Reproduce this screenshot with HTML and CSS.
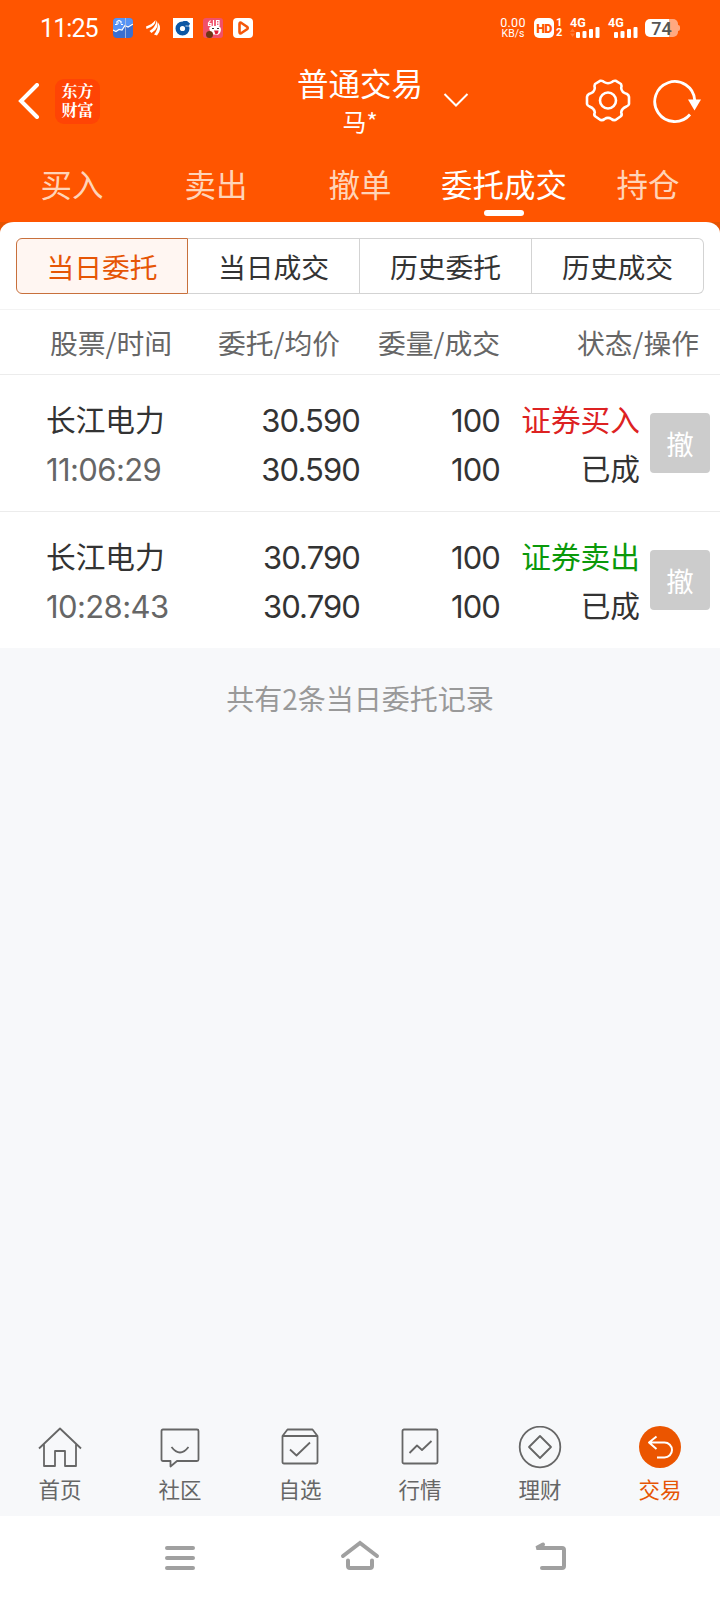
FILE: index.html
```html
<!DOCTYPE html>
<html lang="zh-CN">
<head>
    <meta charset="UTF-8">
    <title>普通交易</title>
    <link rel="stylesheet" href="styles.css">
</head>
<body>
    <header class="top">
        <div class="status-bar">
            <span class="clock">11:25</span>
            <div class="notices">
                <svg width="20" height="20" viewBox="0 0 20 20">
                    <rect width="20" height="20" rx="4" fill="#3a6fd0"/>
                    <path d="M0 12l3 1 3-2 3 1 3-5 3 1 5-3V4a4 4 0 0 0-4-4H4a4 4 0 0 0-4 4z" fill="#5593f5"/>
                    <path d="M0 12l3 1.500 3-2 3 0.500 3-4.500 3 1.500 5-3M2 6.500h2l0-3 2-1 2 1 0 2M5 5h1M8 6.500h2" fill="none" stroke="#fff" stroke-width="1.200"/>
                    <path d="M12.500 0v20" stroke="#b9c3dc" stroke-width="0.800"/>
                </svg>
                <svg width="20" height="20" viewBox="0 0 20 20" fill="#fff">
                    <path d="M3 8.500Q9 6.500 12.500 2Q13 8 3.500 11z"/>
                    <path d="M6.500 13Q12 10 13.800 2.500Q17 10 8.500 15z"/>
                    <path d="M11 16.500Q15 12 15.200 4.500Q19.500 11 14 17.500z"/>
                </svg>
                <svg width="20" height="20" viewBox="0 0 20 20">
                    <rect width="20" height="20" fill="#fff"/>
                    <circle cx="9.500" cy="10.500" r="4.800" fill="none" stroke="#0d57a4" stroke-width="4.400"/>
                    <path d="M11 5.500l6.500 0M12.500 8h5" stroke="#fff" stroke-width="0.800"/>
                    <path d="M10 3h4l3 2.500-1 2-5-1z" fill="#0d57a4"/>
                </svg>
                <svg width="20" height="20" viewBox="0 0 20 20">
                    <rect width="20" height="20" rx="3" fill="#f0506a"/>
                    <path d="M6 10Q8 7 12 8Q17 7 18 11Q18 16 14 17L8 16z" fill="#fff"/>
                    <path d="M7.500 2.500L5.500 5v2.500h2.500V5.500H6M10.500 2v6M16 2.500h-2.500v5H16zM13.500 5H16" fill="none" stroke="#fff" stroke-width="1.200"/>
                    <circle cx="6.500" cy="16.500" r="3.500" fill="#6d3714"/>
                    <path d="M11 12.500h4.500q0 4-3 4z" fill="#e0203a"/>
                    <path d="M9 10.500h2M14 10.500h2" stroke="#333"/>
                </svg>
                <svg width="20" height="20" viewBox="0 0 20 20">
                    <rect width="20" height="20" rx="4" fill="#fff"/>
                    <path d="M6.500 6q0-2 2-1l5.500 3.800q1.500 1.200 0 2.400l-5.500 3.800q-2 1-2-1z" fill="none" stroke="#f4560a" stroke-width="2.600"/>
                </svg>
            </div>
            <div class="net-speed"><span>0.00</span><span class="unit">KB/s</span></div>
            <span class="hd">HD</span>
            <div class="sims"><span>1</span><span>2</span></div>
            <div class="signal">
                <span>4G</span>
                <svg width="31" height="11" viewBox="0 0 31 11" fill="#fff">
                    <path d="M0 5l2.500-3.500L5 5zM0 6.500l2.500 3.500L5 6.500z" fill="#ff7a35"/>
                    <rect x="6" y="5" width="4" height="6" rx="1"/>
                    <rect x="12.500" y="4" width="4" height="7" rx="1"/>
                    <rect x="19" y="2" width="4" height="9" rx="1"/>
                    <rect x="25.500" y="0" width="4" height="11" rx="1"/>
                </svg>
            </div>
            <div class="signal">
                <span>4G</span>
                <svg width="31" height="11" viewBox="0 0 31 11" fill="#fff">
                    <rect x="6" y="5" width="4" height="6" rx="1"/>
                    <rect x="12.500" y="4" width="4" height="7" rx="1"/>
                    <rect x="19" y="2" width="4" height="9" rx="1"/>
                    <rect x="25.500" y="0" width="4" height="11" rx="1"/>
                </svg>
            </div>
            <div class="battery"><span>74</span></div>
            <i class="battery-tip"></i>
        </div>

        <div class="title-bar">
            <div class="title-left">
                <svg width="22" height="36" viewBox="0 0 22 36" fill="none" stroke="#fff" stroke-width="4" stroke-linecap="round">
                    <path d="M19 2L3 18l16 16"/>
                </svg>
                <div class="logo"><span>东方</span><span>财富</span></div>
            </div>
            <div class="title-text">
                <h1>普通交易</h1>
                <p>马*</p>
            </div>
            <div class="title-right">
                <svg class="arrow" width="26" height="16" viewBox="0 0 26 16" fill="none" stroke="#fff" stroke-width="2">
                    <path d="M1.500 1L13 12.500 24.500 1"/>
                </svg>
                <svg class="gear" width="46" height="46" viewBox="0 0 46 46" fill="none" stroke="#fff" stroke-width="2.600" stroke-linejoin="round">
                    <path d="M15.500 2.700Q18 2.500 19 4Q23 6.500 27 4Q28 2.500 30.500 2.700L36 6Q37 8 36.200 10Q36.500 14.500 42 16Q43.800 17 44 19V26Q43.500 28 41.500 28.500Q36.500 30.500 36.200 34.500Q37.500 37 35.500 38.500L30.500 42Q28 42.500 26.500 41Q23 38.800 19.500 41Q18 42.500 15.500 42L10.500 38.500Q8.500 37 9.800 34.500Q9.500 30.500 4.500 28.500Q2.500 28 2 26V19Q2.200 17 4 16Q9.500 14.500 9.800 10Q9 8 10 6Z"/>
                    <circle cx="23" cy="22.500" r="8"/>
                </svg>
                <svg width="48" height="46" viewBox="0 0 48 46">
                    <path d="M37 36.500A20 20 0 1 1 41.700 22" fill="none" stroke="#fff" stroke-width="2.800"/>
                    <path d="M35 21.500H48L41.500 32.500z" fill="#fff"/>
                </svg>
            </div>
        </div>

        <nav class="tabs">
            <a class="tab">买入</a>
            <a class="tab">卖出</a>
            <a class="tab">撤单</a>
            <a class="tab active">委托成交</a>
            <a class="tab">持仓</a>
        </nav>
    </header>

    <main>
        <div class="panel-wrap">
            <section class="panel">
                <div class="segments">
                    <button class="segment selected">当日委托</button>
                    <button class="segment">当日成交</button>
                    <button class="segment">历史委托</button>
                    <button class="segment">历史成交</button>
                </div>
                <div class="list-head">
                    <span>股票/时间</span>
                    <span>委托/均价</span>
                    <span>委量/成交</span>
                    <span>状态/操作</span>
                </div>
                <div class="order">
                    <div class="cell"><span>长江电力</span><span class="num time">11:06:29</span></div>
                    <div class="cell num"><span>30.590</span><span>30.590</span></div>
                    <div class="cell num"><span>100</span><span>100</span></div>
                    <div class="cell"><span class="buy">证券买入</span><span>已成</span></div>
                    <button class="cancel">撤</button>
                </div>
                <div class="order">
                    <div class="cell"><span>长江电力</span><span class="num time">10:28:43</span></div>
                    <div class="cell num"><span>30.790</span><span>30.790</span></div>
                    <div class="cell num"><span>100</span><span>100</span></div>
                    <div class="cell"><span class="sell">证券卖出</span><span>已成</span></div>
                    <button class="cancel">撤</button>
                </div>
            </section>
        </div>
        <p class="summary">共有2条当日委托记录</p>
    </main>

    <nav class="bottom-nav">
        <a class="nav-item">
            <svg width="44" height="44" viewBox="0 0 44 44">
                <path d="M1 22.500L22 2.500l21 20M6 18.500V40H17V25H27V40H38V18.500"/>
            </svg>
            <span>首页</span>
        </a>
        <a class="nav-item">
            <svg width="44" height="44" viewBox="0 0 44 44">
                <path d="M5 3.500H39Q40.500 3.500 40.500 5V33.500Q40.500 35 39 35H19L12.500 40.500V35H5Q3.500 35 3.500 33.500V5Q3.500 3.500 5 3.500zM13.500 21Q22 32 30.500 21"/>
            </svg>
            <span>社区</span>
        </a>
        <a class="nav-item">
            <svg width="44" height="44" viewBox="0 0 44 44">
                <path d="M4.500 10L9.500 3.500H34.500L39.500 10V36Q39.500 37.500 38 37.500H6Q4.500 37.500 4.500 36zM4.500 10H39.500M12 23.500l6.500 6L32 16.500"/>
            </svg>
            <span>自选</span>
        </a>
        <a class="nav-item">
            <svg width="44" height="44" viewBox="0 0 44 44">
                <rect x="4.500" y="3.500" width="35" height="34" rx="1.500"/>
                <path d="M11.500 27L19 19.500l5 4.500 9.500-9"/>
            </svg>
            <span>行情</span>
        </a>
        <a class="nav-item">
            <svg width="44" height="44" viewBox="0 0 44 44">
                <circle cx="22" cy="21" r="20.300"/>
                <path d="M22 10L33 21 22 32 11 21z"/>
            </svg>
            <span>理财</span>
        </a>
        <a class="nav-item current">
            <svg width="44" height="44" viewBox="0 0 44 44">
                <circle class="disc" cx="22" cy="21" r="21"/>
                <path class="back" d="M18.500 10.500L11 16.500l7.500 6.500M11 16.500H26.500A7.500 7.500 0 0 1 26.500 31.500H19"/>
            </svg>
            <span>交易</span>
        </a>
    </nav>

    <div class="system-nav">
        <svg width="40" height="40" viewBox="0 0 40 40">
            <path d="M7 10H33M7 20H33M7 30H33"/>
        </svg>
        <svg width="40" height="40" viewBox="0 0 40 40">
            <path d="M3 18L20 5l17 13M8 22.500V28q0 2 2 2H30q2 0 2-2V22.500"/>
        </svg>
        <svg class="return" width="40" height="40" viewBox="0 0 40 40">
            <path d="M13 6.500L6.500 10H32q2 0 2 2V28q0 2-2 2H12"/>
        </svg>
    </div>
</body>
</html>
```
FILE: styles.css
```css
* {
    box-sizing: border-box;
}
body {
    margin: 0;
    width: 720px;
    height: 1600px;
    display: flex;
    flex-direction: column;
    overflow: hidden;
    background-color: #f7f8fa;
    color: #333;
    font-family: "Noto Sans CJK SC", sans-serif;
}
h1, p {
    margin: 0;
    font-weight: 400;
}
svg {
    display: block;
    flex: none;
}
button {
    font-family: inherit;
    padding: 0;
}
.top {
    height: 222px;
    background-color: #ff5500;
    color: #fff;
}

/* Phone status bar */
.status-bar {
    display: flex;
    align-items: center;
    height: 56px;
    padding: 0 40px;
    font-family: Roboto, sans-serif;
}
.clock {
    width: 73px;
    padding-top: 2px;
    font-size: 25px;
    letter-spacing: -0.9px;
    line-height: 54px;
}
.notices {
    display: flex;
    gap: 10px;
    margin-right: auto;
}
.net-speed {
    display: flex;
    flex-direction: column;
    align-items: center;
    width: 28px;
    font-size: 12.5px;
    line-height: 12px;
    letter-spacing: 0.3px;
}
.net-speed .unit {
    font-size: 10.5px;
    line-height: 10px;
    letter-spacing: 0;
}
.hd {
    width: 20px;
    height: 20px;
    margin-left: 7px;
    border-radius: 5px;
    background-color: #fff;
    color: #ff5500;
    font-size: 12.5px;
    font-weight: 900;
    line-height: 21px;
    text-align: center;
    letter-spacing: -0.6px;
}
.sims {
    display: flex;
    flex-direction: column;
    width: 9px;
    margin: 0 5px 0 2px;
    font-size: 11px;
    line-height: 10px;
    font-weight: 700;
}
.signal {
    width: 31px;
    height: 20px;
    margin-right: 7px;
    font-size: 12.5px;
    font-weight: 700;
    line-height: 10px;
}
.signal span {
    display: block;
    height: 9px;
}
.battery {
    width: 33px;
    height: 18px;
    margin-left: -1px;
    border-radius: 5px;
    background: linear-gradient(90deg, #fff 74%, #ffa880 74%);
    color: #555;
    font-size: 18px;
    font-weight: 500;
    line-height: 20px;
    text-align: center;
}
.battery-tip {
    width: 2px;
    height: 6px;
    border-radius: 0 2px 2px 0;
    background-color: #ffa880;
}

/* App title */
.title-bar {
    display: grid;
    grid-template-columns: 260px 200px 260px;
    height: 96px;
}
.title-left {
    display: flex;
    align-items: center;
    gap: 15px;
    height: 90px;
    padding-left: 18px;
}
.logo {
    display: flex;
    flex-direction: column;
    justify-content: center;
    width: 45px;
    height: 45px;
    border-radius: 9px;
    background-color: #ff4405;
    text-align: center;
    font-family: "Noto Serif CJK SC", "Noto Sans CJK SC", sans-serif;
    font-size: 16px;
    font-weight: 700;
    line-height: 19px;
    padding-bottom: 2px;
}
.title-text {
    text-align: center;
    padding-top: 4px;
}
.title-text h1 {
    font-size: 31.5px;
    line-height: 44px;
}
.title-text p {
    font-size: 24px;
    line-height: 34px;
}
.title-right {
    display: flex;
    align-items: center;
    height: 90px;
    padding-right: 19px;
}
.arrow {
    margin: 0 auto 0 -17px;
}
.gear {
    margin-right: 22px;
}

/* Trade tabs */
.tabs {
    display: flex;
    height: 70px;
}
.tab {
    display: flex;
    flex-direction: column;
    align-items: center;
    width: 144px;
    padding-top: 9px;
    font-size: 31.5px;
    line-height: 44px;
    color: #ffd4b8;
}
.tab.active {
    color: #fff;
}
.tab.active::after {
    content: "";
    width: 40px;
    height: 6px;
    margin-top: 5px;
    border-radius: 3px;
    background-color: #fff;
}

/* Orders */
main {
    flex: 1;
}
.panel-wrap {
    background-color: #e65302;
}
.panel {
    background-color: #fff;
    border-radius: 14px 14px 0 0 / 11px 11px 0 0;
    padding-top: 16px;
}
.segments {
    display: flex;
    height: 56px;
    margin: 0 16px 15px;
}
.segment {
    width: 172px;
    border: 1px solid #d3d3d3;
    border-left-width: 0;
    background-color: #fff;
    color: #333;
    font-size: 27.8px;
    line-height: 54px;
}
.segment:last-child {
    border-radius: 0 6px 6px 0;
}
.segment.selected {
    border: 1px solid #c8703c;
    border-radius: 6px 0 0 6px;
    background-color: #fff6f2;
    color: #e65505;
}
.list-head {
    display: grid;
    grid-template-columns: 130px 160px 160px 199px;
    height: 66px;
    padding-left: 50px;
    border-top: 1px solid #f3f3f3;
    border-bottom: 1px solid #ececec;
    color: #666;
    font-size: 27.8px;
    line-height: 64px;
    text-align: right;
}
.list-head span:first-child {
    text-align: left;
}
.order {
    display: grid;
    grid-template-columns: 134px 180px 140px 140px 70px;
    align-items: center;
    height: 137px;
    padding-left: 46px;
    border-bottom: 1px solid #ececec;
}
.order:last-child {
    height: 136px;
    border-bottom: none;
}
.cell {
    display: flex;
    flex-direction: column;
    text-align: right;
    font-size: 29.7px;
    line-height: 49px;
    padding-bottom: 1px;
}
.cell:first-child {
    text-align: left;
}
.num {
    font-family: Inter, sans-serif;
    font-size: 31px;
    letter-spacing: -0.9px;
}
.cell.num {
    padding: 3px 0 0;
}
.time {
    height: 49px;
    padding-top: 2px;
    letter-spacing: -0.6px;
    color: #666;
}
.buy {
    color: #dd2222;
}
.sell {
    color: #0a990a;
}
.cancel {
    width: 60px;
    height: 60px;
    margin-left: 10px;
    border: none;
    border-radius: 4px;
    background-color: #ccc;
    color: #fff;
    font-size: 27.5px;
}
.summary {
    padding-top: 30px;
    text-align: center;
    font-size: 28px;
    line-height: 40px;
    color: #999;
}

/* Bottom navigation */
.bottom-nav {
    display: flex;
    height: 92px;
    color: #666;
}
.nav-item {
    display: flex;
    flex-direction: column;
    align-items: center;
    width: 120px;
    padding-top: 2px;
    font-size: 21.5px;
    line-height: 38px;
}
.nav-item svg {
    fill: none;
    stroke: #666;
    stroke-width: 1.8;
    stroke-linejoin: round;
}
.nav-item.current {
    color: #e65505;
}
.nav-item .disc {
    fill: #eb5500;
    stroke: none;
}
.nav-item .back {
    stroke: #fff;
    stroke-width: 2;
}
.system-nav {
    display: flex;
    gap: 140px;
    height: 84px;
    padding: 22px 0 0 160px;
    background-color: #fff;
}
.system-nav svg {
    fill: none;
    stroke: #a0a0a0;
    stroke-width: 4;
    stroke-linecap: round;
}
.system-nav .return {
    margin-left: 10px;
}
```
